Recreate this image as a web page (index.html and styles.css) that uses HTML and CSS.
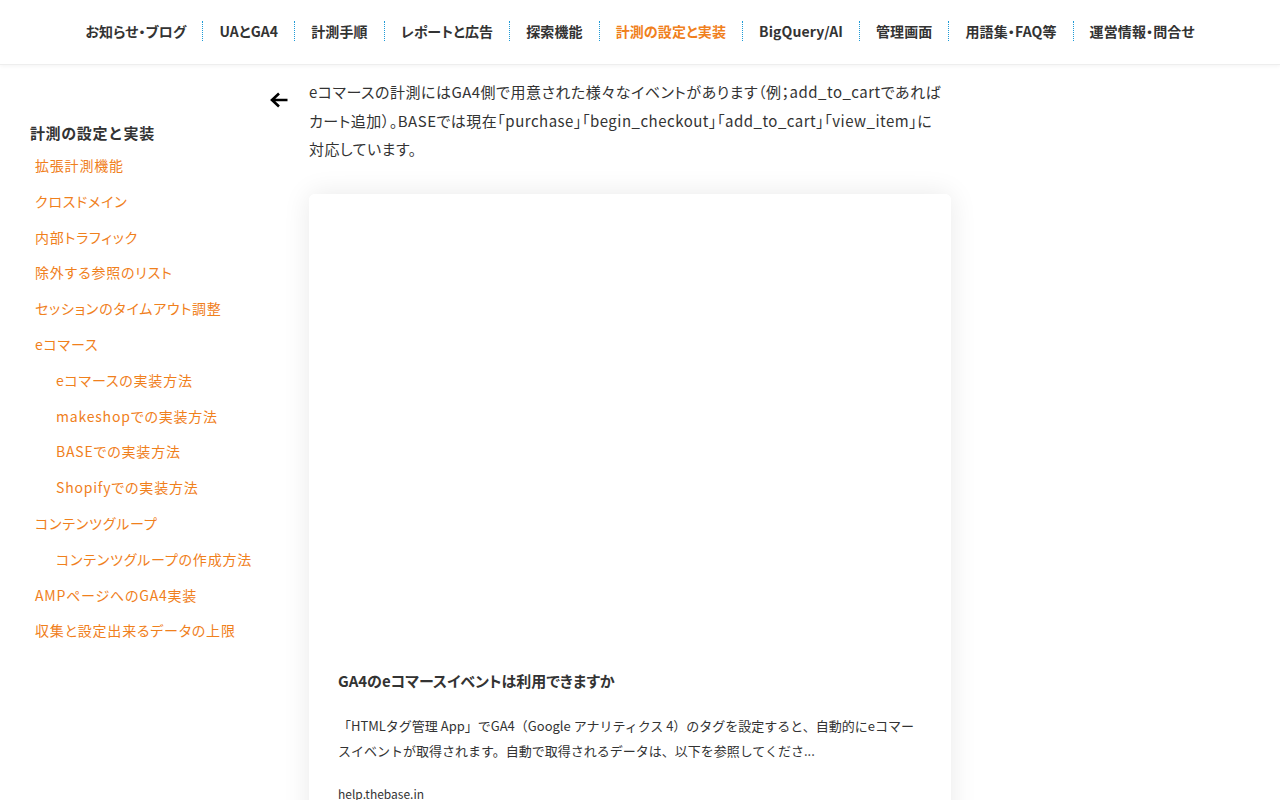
FILE: index.html
```html
<!DOCTYPE html>
<html lang="ja">
<head>
<meta charset="utf-8">
<title>BASEでの実装方法</title>
<link rel="stylesheet" href="styles.css">
</head>
<body>
<header class="site-header">
  <nav class="global-nav">
    <a class="nav-item" href="#">お知らせ・ブログ</a>
    <a class="nav-item" href="#">UAとGA4</a>
    <a class="nav-item" href="#">計測手順</a>
    <a class="nav-item" href="#">レポートと広告</a>
    <a class="nav-item" href="#">探索機能</a>
    <a class="nav-item active" href="#">計測の設定と実装</a>
    <a class="nav-item" href="#">BigQuery/AI</a>
    <a class="nav-item" href="#">管理画面</a>
    <a class="nav-item" href="#">用語集・FAQ等</a>
    <a class="nav-item" href="#">運営情報・問合せ</a>
  </nav>
</header>

<div class="page">
  <aside class="sidebar">
    <h2 class="side-title">計測の設定と実装</h2>
    <ul class="side-list">
      <li><a href="#">拡張計測機能</a></li>
      <li><a href="#">クロスドメイン</a></li>
      <li><a href="#">内部トラフィック</a></li>
      <li><a href="#">除外する参照のリスト</a></li>
      <li><a href="#">セッションのタイムアウト調整</a></li>
      <li><a href="#">eコマース</a></li>
      <li class="sub"><a href="#">eコマースの実装方法</a></li>
      <li class="sub"><a href="#">makeshopでの実装方法</a></li>
      <li class="sub"><a href="#">BASEでの実装方法</a></li>
      <li class="sub"><a href="#">Shopifyでの実装方法</a></li>
      <li><a href="#">コンテンツグループ</a></li>
      <li class="sub"><a href="#">コンテンツグループの作成方法</a></li>
      <li><a href="#">AMPページへのGA4実装</a></li>
      <li><a href="#">収集と設定出来るデータの上限</a></li>
    </ul>
  </aside>

  <div class="back-col">
    <a class="back" href="#" aria-label="戻る">
      <svg width="20" height="18" viewBox="0 0 20 18"><path d="M18.5 9H3.5M10 2.5L3 9l7 6.5" fill="none" stroke="#000" stroke-width="2.6" stroke-linecap="butt" stroke-linejoin="miter"/></svg>
    </a>
  </div>

  <main class="main">
    <p class="intro">eコマースの計測にはGA4側で用意された様々なイベントがあります（例；add_to_cartであれば<br>カート追加）。BASEでは現在「purchase」「begin_checkout」「add_to_cart」「view_item」に<br>対応しています。</p>

    <article class="card">
      <div class="card-image"></div>
      <div class="card-body">
        <h3 class="card-title">GA4のeコマースイベントは利用できますか</h3>
        <p class="card-text">「HTMLタグ管理 App」でGA4（Google アナリティクス 4）のタグを設定すると、自動的にeコマースイベントが取得されます。自動で取得されるデータは、以下を参照してくださ...</p>
        <p class="card-domain">help.thebase.in</p>
      </div>
    </article>
  </main>
</div>
</body>
</html>
```

FILE: styles.css
```css
html, body {
  margin: 0;
  padding: 0;
  background: #fff;
}
body {
  font-family: "Noto Sans CJK JP", "Noto Sans", sans-serif;
  color: #333;
  overflow: hidden;
  height: 800px;
}
a { text-decoration: none; }

.site-header {
  height: 64px;
  border-bottom: 1px solid #eee;
  box-shadow: 0 1px 4px rgba(0,0,0,0.05);
  display: flex;
  justify-content: center;
  align-items: flex-start;
}
.global-nav {
  display: flex;
  padding-top: 21px;
}
.nav-item {
  font-size: 14px;
  font-weight: 700;
  line-height: 20px;
  letter-spacing: 0.12px;
  color: #333;
  padding: 0 16px;
  border-left: 1px dotted #1e9ad6;
  font-feature-settings: "palt";
  white-space: nowrap;
}
.nav-item:first-child { border-left: none; }
.nav-item.active { color: #f0801c; }

.page {
  display: grid;
  grid-template-columns: 260px 49px 642px;
  align-items: start;
}

.sidebar {
  padding: 57px 0 0 30px;
  white-space: nowrap;
}
.side-title {
  margin: 0 0 4px 0;
  font-size: 15px;
  font-weight: 700;
  line-height: 22px;
  letter-spacing: 0.6px;
  color: #333;
}
.side-list {
  list-style: none;
  margin: 0;
  padding: 0 0 0 5px;
}
.side-list li {
  line-height: 35.8px;
  font-size: 14px;
  letter-spacing: 0.8px;
  font-feature-settings: "palt";
}
.side-list li.sub { padding-left: 21px; }
.side-list a { color: #f0801c; }

.back-col {
  padding: 26px 0 0 9px;
}
.back { display: block; width: 20px; height: 18px; }
.back svg { display: block; }

.main {
  padding-top: 13px;
}
.intro {
  margin: 0;
  font-size: 15px;
  line-height: 28.5px;
  letter-spacing: 0.5px;
  color: #333;
  font-feature-settings: "palt";
  white-space: nowrap;
}
.card {
  margin-top: 30px;
  background: #fff;
  border-radius: 6px;
  box-shadow: 0 0 28px rgba(0,0,0,0.09);
  overflow: hidden;
}
.card-image {
  height: 450px;
  background: #fff;
}
.card-body {
  padding: 26px 29px 40px;
}
.card-title {
  margin: 0;
  font-size: 15px;
  line-height: 22px;
  font-weight: 700;
  color: #333;
  font-feature-settings: "palt";
}
.card-text {
  margin: 21px 0 0;
  font-size: 13px;
  line-height: 25px;
  letter-spacing: 0;
  color: #333;
}
.card-domain {
  margin: 22px 0 0;
  font-size: 12px;
  line-height: 18px;
  color: #333;
}
```
